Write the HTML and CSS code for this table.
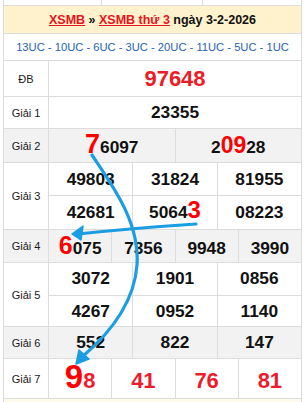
FILE: index.html
```html
<!DOCTYPE html>
<html lang="vi">
<head>
<meta charset="utf-8">
<title>XSMB thứ 3</title>
<link rel="stylesheet" href="styles.css">
</head>
<body>
<div class="board">
  <div class="prev"><div></div><div></div><div></div></div>
  <div class="head"><a href="#">XSMB</a> » <a href="#">XSMB thứ 3</a> ngày 3-2-2026</div>
  <div class="codes">13UC - 10UC - 6UC - 3UC - 20UC - 11UC - 5UC - 1UC</div>

  <div class="row">
    <div class="lbl">ĐB</div>
    <div class="cells c1 h-db"><div class="n db">97648</div></div>
  </div>
  <div class="row">
    <div class="lbl">Giải 1</div>
    <div class="cells c1 h-g1"><div class="n">23355</div></div>
  </div>
  <div class="row alt">
    <div class="lbl">Giải 2</div>
    <div class="cells c2 h-g2">
      <div class="n"><span class="big b7">7</span>6097</div>
      <div class="n">2<span class="big b09">09</span>28</div>
    </div>
  </div>
  <div class="row">
    <div class="lbl">Giải 3</div>
    <div class="cells c3 h-g3">
      <div class="n">49803</div><div class="n">31824</div><div class="n">81955</div>
      <div class="n">42681</div><div class="n">5064<span class="big b3">3</span></div><div class="n">08223</div>
    </div>
  </div>
  <div class="row alt">
    <div class="lbl">Giải 4</div>
    <div class="cells c4 h-g4">
      <div class="n"><span class="big b6">6</span>075</div><div class="n">7356</div><div class="n">9948</div><div class="n">3990</div>
    </div>
  </div>
  <div class="row">
    <div class="lbl">Giải 5</div>
    <div class="cells c3 h-g5">
      <div class="n">3072</div><div class="n">1901</div><div class="n">0856</div>
      <div class="n">4267</div><div class="n">0952</div><div class="n">1140</div>
    </div>
  </div>
  <div class="row alt">
    <div class="lbl">Giải 6</div>
    <div class="cells c3 h-g6">
      <div class="n">552</div><div class="n">822</div><div class="n">147</div>
    </div>
  </div>
  <div class="row">
    <div class="lbl">Giải 7</div>
    <div class="cells c4 h-g7">
      <div class="n red"><span class="big b9">9</span>8</div><div class="n red">41</div><div class="n red">76</div><div class="n red">81</div>
    </div>
  </div>
  <div class="next"></div>
</div>

<svg class="arrows" width="306" height="402" viewBox="0 0 306 402" aria-hidden="true">
  <path d="M92,155 C112,185 140,222 137,265 C134,305 108,335 82,357" fill="none" stroke="#1b9de2" stroke-width="3.2" stroke-linecap="round"/>
  <path d="M76,364 L79,350 L89,359 Z" fill="#1b9de2" stroke="#1b9de2" stroke-width="1.5" stroke-linejoin="round"/>
  <path d="M196,224 Q135,228 78,234" fill="none" stroke="#1b9de2" stroke-width="3.2" stroke-linecap="round"/>
  <path d="M72,234 L83,226 L81,240 Z" fill="#1b9de2" stroke="#1b9de2" stroke-width="1.5" stroke-linejoin="round"/>
</svg>
</body>
</html>
```

FILE: styles.css
```css
html, body {
  margin: 0;
  padding: 0;
  background: #fff;
}
body {
  font-family: "Liberation Sans", Arial, sans-serif;
  color: #111;
  width: 306px;
  height: 402px;
  overflow: hidden;
  position: relative;
}
.board {
  margin-left: 3px;
  width: 299px;
  box-sizing: border-box;
  border-left: 1px solid #dcdcdc;
  border-right: 1px solid #dcdcdc;
  background: #dcdcdc;
  display: flex;
  flex-direction: column;
  gap: 1px;
}
.prev {
  height: 5px;
  display: grid;
  grid-template-columns: 97px 100px 1fr;
  gap: 1px;
}
.prev div { background: #fff; }
.head {
  height: 27px;
  background: #fff2cc;
  display: flex;
  align-items: center;
  justify-content: center;
  font-weight: bold;
  font-size: 12.5px;
  white-space: pre;
  color: #111;
}
.head a {
  color: #e8141e;
  text-decoration: underline;
}
.codes {
  height: 26px;
  background: #fff;
  display: flex;
  align-items: center;
  justify-content: center;
  font-size: 11.2px;
  color: #1f63b2;
  white-space: nowrap;
}
.row {
  display: grid;
  grid-template-columns: 44px 1fr;
  gap: 1px;
}
.lbl {
  background: #fff;
  display: flex;
  align-items: center;
  justify-content: center;
  font-size: 11px;
  color: #1a1a1a;
}
.cells {
  display: grid;
  gap: 1px;
}
.c1 { grid-template-columns: 1fr; }
.c2 { grid-template-columns: 1fr 1fr; }
.c3 { grid-template-columns: 1fr 1fr 1fr; }
.c4 { grid-template-columns: 1fr 1fr 1fr 1fr; }
.h-db { grid-template-rows: 35px; }
.h-g1 { grid-template-rows: 31px; }
.h-g2 { grid-template-rows: 33px; }
.h-g3 { grid-template-rows: 32px 33px; }
.h-g4 { grid-template-rows: 32px; }
.h-g5 { grid-template-rows: 32px 30px; }
.h-g6 { grid-template-rows: 31px; }
.h-g7 { grid-template-rows: 39px; }
.n {
  background: #fff;
  display: block;
  text-align: center;
  white-space: nowrap;
  font-weight: bold;
  font-size: 17.3px;
  line-height: 31px;
  color: #111;
}
.h-db .n { line-height: 35px; }
.h-g2 .n { line-height: 33px; padding-top: 2px; box-sizing: border-box; }
.h-g3 .n { line-height: 32px; }
.h-g4 .n { line-height: 32px; padding-top: 2px; box-sizing: border-box; }
.h-g5 .n { line-height: 31px; }
.h-g7 .n { line-height: 39px; padding-top: 2px; box-sizing: border-box; }
.alt .lbl, .alt .n { background: #f2f2f2; }
.db {
  font-size: 22px;
  color: #ec1c24;
}
.red {
  color: #ec1c2c;
  font-size: 22px;
}
.big {
  color: #ff0000;
  line-height: 0;
  vertical-align: baseline;
}
.b7 { font-size: 27px; }
.b09 { font-size: 23px; }
.b3 { font-size: 24px; }
.b6 { font-size: 25px; }
.b9 { font-size: 33px; }
.next {
  height: 10px;
  background: #fffbea;
}
.arrows {
  position: absolute;
  left: 0;
  top: 0;
  pointer-events: none;
}
```
